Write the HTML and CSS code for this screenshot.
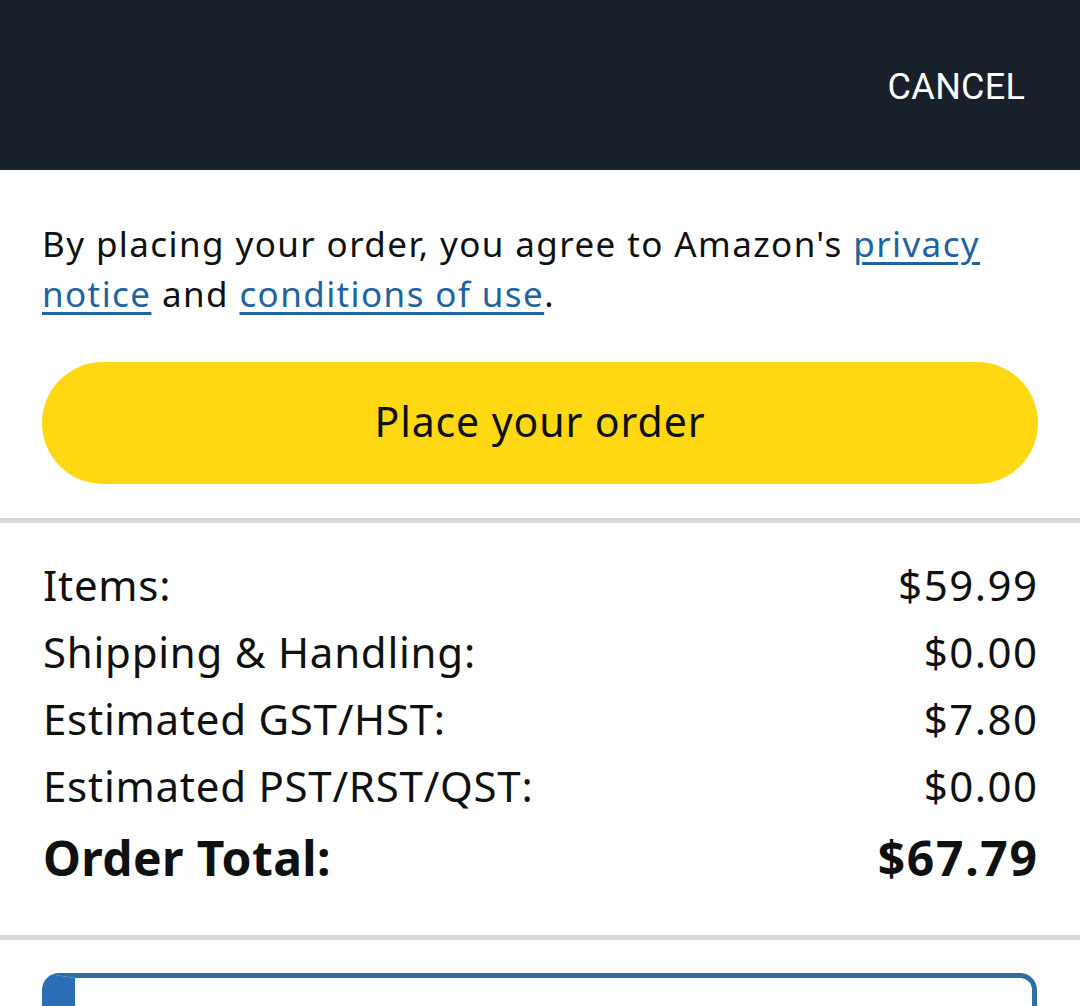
FILE: index.html
```html
<!DOCTYPE html>
<html lang="en">
<head>
<meta charset="utf-8">
<title>Place your order</title>
<link rel="stylesheet" href="styles.css">
</head>
<body>
<header class="topbar">
  <a class="cancel" href="#">CANCEL</a>
</header>
<main class="content">
  <section class="agree">
    <p class="agree-text">By placing your order, you agree to Amazon's <a href="#">privacy notice</a> and <a href="#">conditions of use</a>.</p>
    <button class="place-btn" type="button">Place your order</button>
  </section>
  <hr class="divider">
  <section class="summary">
    <div class="row"><span class="label">Items:</span><span class="amount">$59.99</span></div>
    <div class="row"><span class="label">Shipping &amp; Handling:</span><span class="amount">$0.00</span></div>
    <div class="row"><span class="label">Estimated GST/HST:</span><span class="amount">$7.80</span></div>
    <div class="row"><span class="label">Estimated PST/RST/QST:</span><span class="amount">$0.00</span></div>
    <div class="row total"><span class="label">Order Total:</span><span class="amount">$67.79</span></div>
  </section>
  <hr class="divider">
  <section class="next">
    <div class="info-box"></div>
  </section>
</main>
</body>
</html>
```
FILE: styles.css
```css
* { box-sizing: border-box; }
html, body { margin: 0; padding: 0; background: #fff; }
body {
  font-family: "Noto Sans", "Open Sans", sans-serif;
  color: #0f1111;
  width: 1080px;
  overflow: hidden;
}
.topbar {
  height: 170px;
  background: #18202b;
  display: flex;
  align-items: center;
  justify-content: flex-end;
  padding-right: 55px;
}
.cancel {
  font-family: Roboto, "Liberation Sans", sans-serif;
  font-size: 36px;
  line-height: 42px;
  color: #ffffff;
  text-decoration: none;
  letter-spacing: 0.3px;
  margin-right: -0.3px;
  padding-top: 4px;
}
.agree {
  padding: 49px 42px 34px 42px;
}
.agree-text {
  margin: 0;
  font-size: 35px;
  line-height: 50px;
  letter-spacing: 1.4px;
}
.agree-text a {
  color: #2162a1;
  text-decoration: underline;
  text-decoration-thickness: 3px;
  text-underline-offset: 5px;
}
.place-btn {
  display: block;
  width: 100%;
  height: 122px;
  margin-top: 43px;
  border: none;
  border-radius: 61px;
  background: #ffd814;
  color: #0f1111;
  font-family: "Noto Sans", "Open Sans", sans-serif;
  font-size: 41px;
  letter-spacing: 0.9px;
  padding: 0 0 4px 0;
}
.divider {
  margin: 0;
  border: none;
  height: 5px;
  background: #d5d9d9;
}
.summary {
  padding: 28px 43px 38px 43px;
}
.row {
  display: flex;
  justify-content: space-between;
  font-size: 42px;
  line-height: 67px;
}
.row .label { letter-spacing: 0.75px; }
.row .amount { letter-spacing: 1.5px; margin-right: -1.5px; }
.row.total {
  font-weight: 700;
  font-size: 48px;
  line-height: 78px;
}
.row.total .label { letter-spacing: 0.4px; }
.row.total .amount { letter-spacing: 1.7px; margin-right: -1.7px; }
.next {
  padding: 33px 43px 0 42px;
}
.info-box {
  height: 120px;
  border: 5px solid #2f6da2;
  border-left: 33px solid #2a6fb5;
  border-radius: 17px;
}
```
